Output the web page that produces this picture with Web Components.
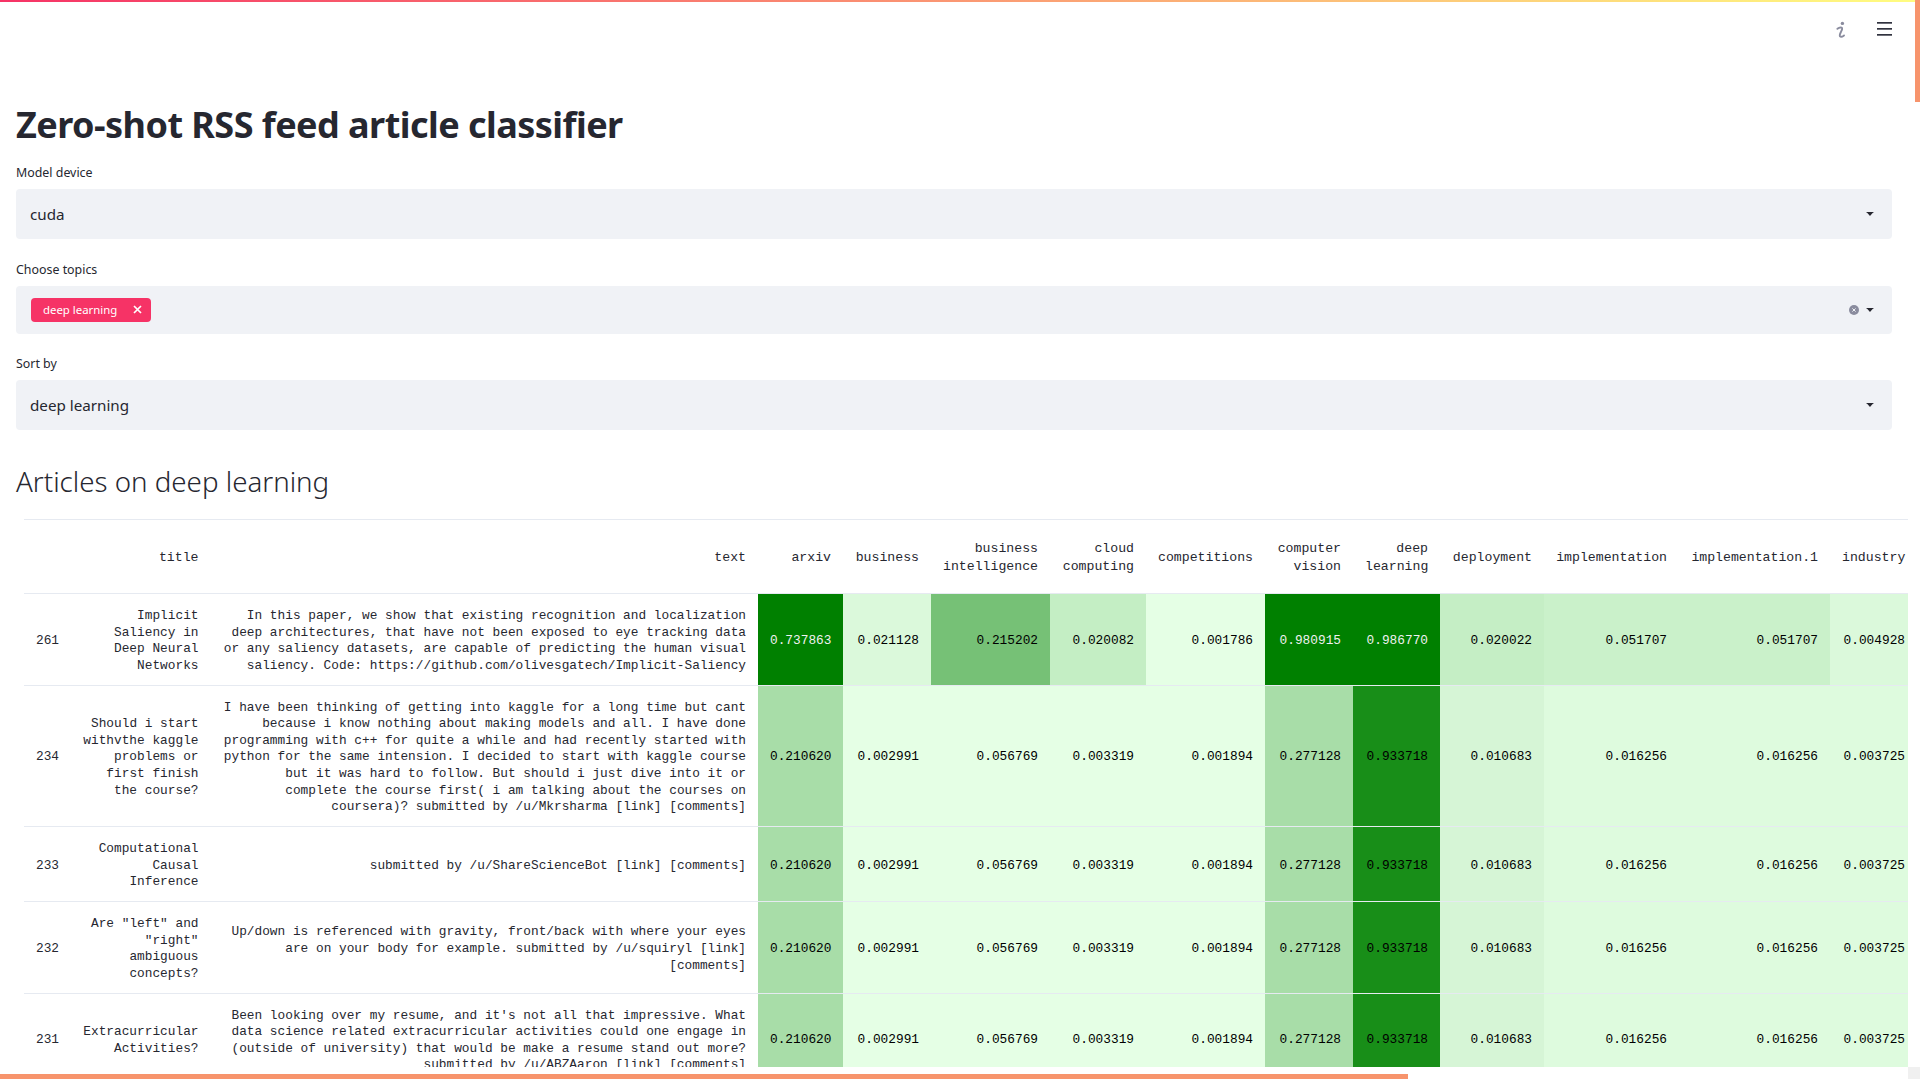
<!DOCTYPE html>
<html lang="en">
<head>
<meta charset="utf-8">
<title>Zero-shot RSS feed article classifier</title>
<style>
  html, body { margin: 0; height: 100%; overflow: hidden; background: #fff; }
  body { font-family: "Noto Sans", "Open Sans", sans-serif; color: #262730; }
</style>
</head>
<body>
<st-app>
  <st-title>Zero-shot RSS feed article classifier</st-title>
  <st-select label="Model device" value="cuda" style="margin-bottom:22px"></st-select>
  <st-select label="Choose topics" chip="deep learning"></st-select>
  <st-select label="Sort by" value="deep learning"></st-select>
  <st-heading>Articles on deep learning</st-heading>
  <st-table></st-table>
</st-app>

<script>
/**
 * Shell of the page: gradient line, toolbar, content column, scroll thumbs
 */
class StApp extends HTMLElement {
  constructor() {
    super();
    this.attachShadow({ mode: "open" });
  }

  connectedCallback() {
    this.shadowRoot.innerHTML = `
      <style>
        :host { display: block; position: relative; height: 1079px; overflow: hidden; }
        .decoration { height: 2px; background: linear-gradient(90deg, #f63366, #fffd80); }
        .toolbar { height: 45px; padding-right: 28px; display: flex; justify-content: flex-end; align-items: flex-start; gap: 31px; }
        .toolbar svg { display: block; margin-top: 18.6px; }
        main { padding: 56px 0 0 16px; }
        .thumb-v { position: absolute; right: 0; top: 0; width: 5px; height: 102px; background: #f7946c; }
        .thumb-h { position: absolute; left: 0; bottom: 0; width: 1408px; height: 5px; background: #f7946c; }
        .corner { position: absolute; right: 0; bottom: 0; width: 12px; height: 12px; background: #f0f0f0; }
      </style>
      <div class="decoration"></div>
      <div class="toolbar">
        <svg width="10" height="18" viewBox="0 0 10 18" fill="none">
          <circle cx="6.4" cy="2.4" r="1.7" fill="#8a8c9e"/>
          <path d="M1.4 7.8C2.6 6.8 4.6 6.2 5.6 6.7C6.8 7.3 5.9 9 5 10.8C4.1 12.6 3.2 14.3 4 15.3C4.8 16.2 6.6 15.5 8 14.4" stroke="#8a8c9e" stroke-width="1.9" stroke-linecap="round"/>
        </svg>
        <svg width="15" height="14" viewBox="0 0 15 14" style="margin-top:20px">
          <rect x="0" y="0" width="15" height="1.7" fill="#31333f"/>
          <rect x="0" y="6" width="15" height="1.7" fill="#31333f"/>
          <rect x="0" y="12" width="15" height="1.7" fill="#31333f"/>
        </svg>
      </div>
      <main><slot></slot></main>
      <div class="thumb-v"></div>
      <div class="corner"></div>
      <div class="thumb-h"></div>
    `;
  }
}

class StTitle extends HTMLElement {
  constructor() {
    super();
    this.attachShadow({ mode: "open" });
  }

  connectedCallback() {
    this.shadowRoot.innerHTML = `
      <style>
        :host { display: block; margin-bottom: 17px; font: 700 36px/44px "Noto Sans", sans-serif; letter-spacing: -0.54px; color: #262730; }
      </style>
      <slot></slot>
    `;
  }
}

class StHeading extends HTMLElement {
  constructor() {
    super();
    this.attachShadow({ mode: "open" });
  }

  connectedCallback() {
    this.shadowRoot.innerHTML = `
      <style>
        :host { display: block; margin: 31px 0 18px; font: 300 27.7px/40px "Noto Sans", sans-serif; color: #262730; }
      </style>
      <slot></slot>
    `;
  }
}

/**
 * Labelled select box, with either a plain value or a removable chip
 */
class StSelect extends HTMLElement {
  constructor() {
    super();
    this.attachShadow({ mode: "open" });
  }

  connectedCallback() {
    const label = this.getAttribute("label");
    const value = this.getAttribute("value");
    const chip = this.getAttribute("chip");
    const caret = `<svg class="caret" width="8" height="4" viewBox="0 0 8 4"><path d="M0 0H8L6.4 1.2L4 4L1.6 1.2Z" fill="#262730"/></svg>`;

    this.shadowRoot.innerHTML = `
      <style>
        :host { display: block; width: 1876px; margin-bottom: 21px; }
        label { display: block; height: 25px; font-size: 12.4px; line-height: 18px; color: #262730; }
        .box { height: ${chip ? 48 : 50}px; background: #f0f2f6; border-radius: 4px; display: flex; align-items: center; padding: 0 18px 0 14px; box-sizing: border-box; font-size: 15.2px; color: #262730; }
        .value { flex: 1; }
        .chip { display: inline-flex; align-items: center; box-sizing: border-box; height: 24px; padding: 0 9px 1px 12px; margin-left: 1px; background: #f63366; color: #fff; border-radius: 4px; font-size: 11.4px; }
        .chip svg { margin-left: 16px; }
        .clear { margin-right: 7px; display: block; }
        .caret { display: block; }
      </style>
      <label>${label}</label>
      <div class="box">
        <div class="value">
          ${chip ? `<span class="chip">${chip}<svg width="9" height="9" viewBox="0 0 9 9"><path d="M1 1L8 8M8 1L1 8" stroke="#fff" stroke-width="1.7"/></svg></span>` : value}
        </div>
        ${chip ? `<svg class="clear" width="10" height="10" viewBox="0 0 10 10"><circle cx="5" cy="5" r="5" fill="#8a8c9e"/><path d="M3.4 3.4L6.6 6.6M6.6 3.4L3.4 6.6" stroke="#f0f2f6" stroke-width="1"/></svg>` : ""}
        ${caret}
      </div>
    `;
  }
}

/**
 * Styled dataframe. Cell colours are given per value, like the pandas gradient
 */
const COLUMNS = [
  ["", 47], ["title", 139.5], ["text", 547.5], ["arxiv", 85], ["business", 88],
  ["business<br>intelligence", 119], ["cloud<br>computing", 96], ["competitions", 119],
  ["computer<br>vision", 88], ["deep<br>learning", 87], ["deployment", 104],
  ["implementation", 135], ["implementation.1", 151], ["industry", 87]
];

const LOW = "#e5ffe5";
const REST = [
  ["0.210620", "#a8dda8"], ["0.002991", LOW], ["0.056769", LOW], ["0.003319", LOW], ["0.001894", LOW],
  ["0.277128", "#a8dda8"], ["0.933718", "#188e18"], ["0.010683", "#d6f5d6"],
  ["0.016256", "#defbde"], ["0.016256", "#defbde"], ["0.003725", "#defbde"]
];

const ROWS = [
  {
    id: 261,
    title: "Implicit Saliency in Deep Neural Networks",
    text: "In this paper, we show that existing recognition and localization deep architectures, that have not been exposed to eye tracking data or any saliency datasets, are capable of predicting the human visual saliency. Code: https://github.com/olivesgatech/Implicit-Saliency",
    cells: [
      ["0.737863", "#008000", "#f1f1f1"], ["0.021128", "#dbf9db"], ["0.215202", "#76c176"], ["0.020082", "#c4eec4"],
      ["0.001786", LOW], ["0.980915", "#008000", "#f1f1f1"], ["0.986770", "#008000", "#f1f1f1"], ["0.020022", "#c5eec5"],
      ["0.051707", "#caf1ca"], ["0.051707", "#caf1ca"], ["0.004928", "#dbf9db"]
    ]
  },
  {
    id: 234,
    title: "Should i start withvthe kaggle problems or first finish the course?",
    text: "I have been thinking of getting into kaggle for a long time but cant because i know nothing about making models and all. I have done programming with c++ for quite a while and had recently started with python for the same intension. I decided to start with kaggle course but it was hard to follow. But should i just dive into it or complete the course first( i am talking about the courses on coursera)? submitted by /u/Mkrsharma [link] [comments]",
    cells: REST
  },
  {
    id: 233,
    title: "Computational Causal Inference",
    text: "submitted by /u/ShareScienceBot [link] [comments]",
    cells: REST
  },
  {
    id: 232,
    title: "Are \"left\" and \"right\" ambiguous concepts?",
    text: "Up/down is referenced with gravity, front/back with where your eyes are on your body for example. submitted by /u/squiryl [link] [comments]",
    cells: REST
  },
  {
    id: 231,
    title: "Extracurricular Activities?",
    text: "Been looking over my resume, and it's not all that impressive. What data science related extracurricular activities could one engage in (outside of university) that would be make a resume stand out more? submitted by /u/ABZAaron [link] [comments]",
    cells: REST
  }
];

class StTable extends HTMLElement {
  constructor() {
    super();
    this.attachShadow({ mode: "open" });
  }

  connectedCallback() {
    const cols = COLUMNS.map(([, w]) => `<col style="width:${w}px">`).join("");
    const head = COLUMNS.map(([name]) => `<th>${name}</th>`).join("");
    const body = ROWS.map((row) => `
      <tr>
        <td>${row.id}</td>
        <td>${row.title}</td>
        <td>${row.text}</td>
        ${row.cells.map(([v, bg, fg]) => `<td style="background:${bg};color:${fg || "#000"}">${v}</td>`).join("")}
      </tr>`).join("");

    this.shadowRoot.innerHTML = `
      <style>
        :host { display: block; margin-left: 8px; width: 1884px; height: 548px; overflow: hidden; }
        table { border-collapse: collapse; table-layout: fixed; width: 1493.5px; font-family: "Liberation Mono", monospace; color: #262730; }
        th, td { border-bottom: 1px solid #e6eaf1; text-align: right; vertical-align: middle; overflow: hidden; }
        th { height: 49px; padding: 13px 12px 11px; font-weight: 400; font-size: 13.2px; line-height: 17.2px; border-top: 1px solid #e6eaf1; }
        td { padding: 14px 12px 10px; font-size: 12.8px; line-height: 16.64px; }
        td:first-child { text-align: left; color: #262730; }
      </style>
      <table>
        <colgroup>${cols}</colgroup>
        <thead><tr>${head}</tr></thead>
        <tbody>${body}</tbody>
      </table>
    `;
  }
}

customElements.define("st-app", StApp);
customElements.define("st-title", StTitle);
customElements.define("st-heading", StHeading);
customElements.define("st-select", StSelect);
customElements.define("st-table", StTable);
</script>
</body>
</html>
